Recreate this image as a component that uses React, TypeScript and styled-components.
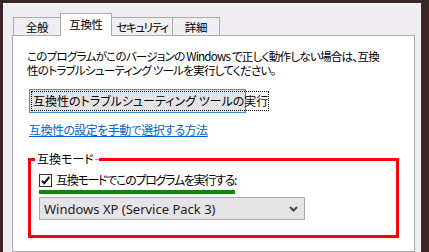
import React from "react";
import styled, { createGlobalStyle } from "styled-components";

const GlobalStyle = createGlobalStyle`
  html, body {
    margin: 0;
    padding: 0;
    background: #3a2424;
  }
  body {
    font-family: "Noto Sans CJK JP", "Noto Sans", sans-serif;
    color: #000;
  }
`;

const Frame = styled.div`
  width: 429px;
  height: 252px;
  box-sizing: border-box;
  padding: 3px 8px 0 3px;
  background: #3a2424;
  display: flex;
  overflow: hidden;
`;

const Window = styled.div`
  flex: 1;
  background: #efedf0;
  border-left: 1px solid #fbfbfb;
  border-top: 1px solid #fbfbfb;
  padding: 9px 6px 0 8px;
  display: flex;
  flex-direction: column;
`;

const TabRow = styled.div`
  display: flex;
  align-items: flex-end;
  height: 23px;
  padding-left: 1px;
  margin-bottom: -1px;
  position: relative;
  z-index: 1;
`;

const Tab = styled.div<{ $w: number; $active?: boolean }>`
  flex: none;
  width: ${(p) => p.$w}px;
  height: ${(p) => (p.$active ? 23 : 19)}px;
  box-sizing: border-box;
  margin-left: -1px;
  border: 1px solid #acacac;
  border-bottom: ${(p) => (p.$active ? "none" : "1px solid #acacac")};
  background: ${(p) => (p.$active ? "#ffffff" : "#f0eef0")};
  display: flex;
  align-items: center;
  justify-content: center;
  font-size: 11.5px;
  line-height: 14px;
  font-feature-settings: "palt";
  letter-spacing: ${(p) => (p.$w > 55 ? -1.4 : -0.3)}px;
  white-space: nowrap;
  padding-bottom: ${(p) => (p.$active ? 2 : 0)}px;
  position: relative;
  z-index: ${(p) => (p.$active ? 2 : 1)};
  &:first-child {
    margin-left: 0;
  }
`;

const Panel = styled.div`
  height: 240px;
  box-sizing: border-box;
  background: #ffffff;
  border: 1px solid #acacac;
  padding: 13px 14px 0 14px;
  display: flex;
  flex-direction: column;
  align-items: flex-start;
`;

const Paragraph = styled.p`
  margin: 0;
  font-size: 11.6px;
  line-height: 14px;
  font-feature-settings: "palt";
  letter-spacing: -0.8px;
  white-space: nowrap;
`;

const ActionButton = styled.div`
  margin: 12px 0 0 2px;
  width: 217px;
  height: 24px;
  box-sizing: border-box;
  border: 1px solid #3c8fe0;
  background: #e4e3e6;
  padding: 1px;
  display: flex;
`;

const FocusRing = styled.div`
  flex: 1;
  border: 1px dotted #000;
  display: flex;
  align-items: center;
  padding-left: 1px;
  font-size: 12px;
  line-height: 14px;
  font-feature-settings: "palt";
  white-space: nowrap;
`;

const HelpLink = styled.a`
  margin: 10px 0 0 2px;
  font-size: 12px;
  line-height: 14px;
  font-feature-settings: "palt";
  letter-spacing: -0.55px;
  color: #0066cc;
  text-decoration: underline;
  cursor: pointer;
`;

const ModeGroup = styled.fieldset`
  margin: 15px 0 0 1px;
  width: 371px;
  box-sizing: border-box;
  border: 3px solid #ff0000;
  padding: 0 0 15px 8px;
  min-inline-size: 0;
`;

const GroupLegend = styled.legend`
  margin-left: -4px;
  padding: 0 5px 0 2px;
  font-size: 12px;
  line-height: 14px;
  font-feature-settings: "palt";
  position: relative;
  &::after {
    content: "";
    position: absolute;
    right: 0;
    top: 7px;
    width: 4px;
    height: 1px;
    background: #a0a0a0;
  }
`;

const CheckRow = styled.label`
  margin-top: 7px;
  display: flex;
  align-items: center;
  gap: 4px;
  font-size: 12px;
  line-height: 14px;
  font-feature-settings: "palt";
  letter-spacing: -1.3px;
  white-space: nowrap;
`;

const CheckBox = styled.span`
  width: 13px;
  height: 13px;
  box-sizing: border-box;
  border: 1px solid #333;
  background: #fff;
  display: flex;
  align-items: center;
  justify-content: center;
`;

const Underline = styled.div<{ $w: number }>`
  margin-top: 3px;
  width: ${(p) => p.$w}px;
  height: 4px;
  background: #0a8a0a;
`;

const Select = styled.div`
  margin-top: 3px;
  width: 266px;
  height: 23px;
  box-sizing: border-box;
  border: 1px solid #acacac;
  background: #e6e4e8;
  display: flex;
  align-items: center;
  justify-content: space-between;
  padding: 0 6px 0 4px;
  font-family: "Noto Sans", "Open Sans", sans-serif;
  font-size: 13px;
  color: #222;
`;

function App() {
    const tabs = [
        {label: "全般", w: 48},
        {label: "互換性", w: 52, active: true},
        {label: "セキュリティ", w: 62},
        {label: "詳細", w: 48},
    ];

    return (
        <>
            <GlobalStyle/>
            <Frame>
                <Window>
                    <TabRow>
                        {tabs.map((t) => (
                            <Tab key={t.label} $w={t.w} $active={t.active}>{t.label}</Tab>
                        ))}
                    </TabRow>
                    <Panel>
                        <Paragraph>
                            このプログラムがこのバージョンの Windows で正しく動作しない場合は、互換
                            <br/>
                            性のトラブルシューティング ツールを実行してください。
                        </Paragraph>
                        <ActionButton>
                            <FocusRing>互換性のトラブルシューティング ツールの実行</FocusRing>
                        </ActionButton>
                        <HelpLink>互換性の設定を手動で選択する方法</HelpLink>
                        <ModeGroup>
                            <GroupLegend>互換モード</GroupLegend>
                            <CheckRow>
                                <CheckBox>
                                    <svg width="11" height="11" viewBox="0 0 11 11">
                                        <path d="M1.8 5.6 L4.2 8.2 L9.4 1.8" fill="none" stroke="#111" strokeWidth="2"/>
                                    </svg>
                                </CheckBox>
                                互換モードでこのプログラムを実行する:
                            </CheckRow>
                            <Underline $w={196}/>
                            <Select>
                                Windows XP (Service Pack 3)
                                <svg width="9" height="6" viewBox="0 0 9 6">
                                    <path d="M1 1 L4.5 4.5 L8 1" fill="none" stroke="#444" strokeWidth="2"/>
                                </svg>
                            </Select>
                        </ModeGroup>
                    </Panel>
                </Window>
            </Frame>
        </>
    );
}

export default App;
